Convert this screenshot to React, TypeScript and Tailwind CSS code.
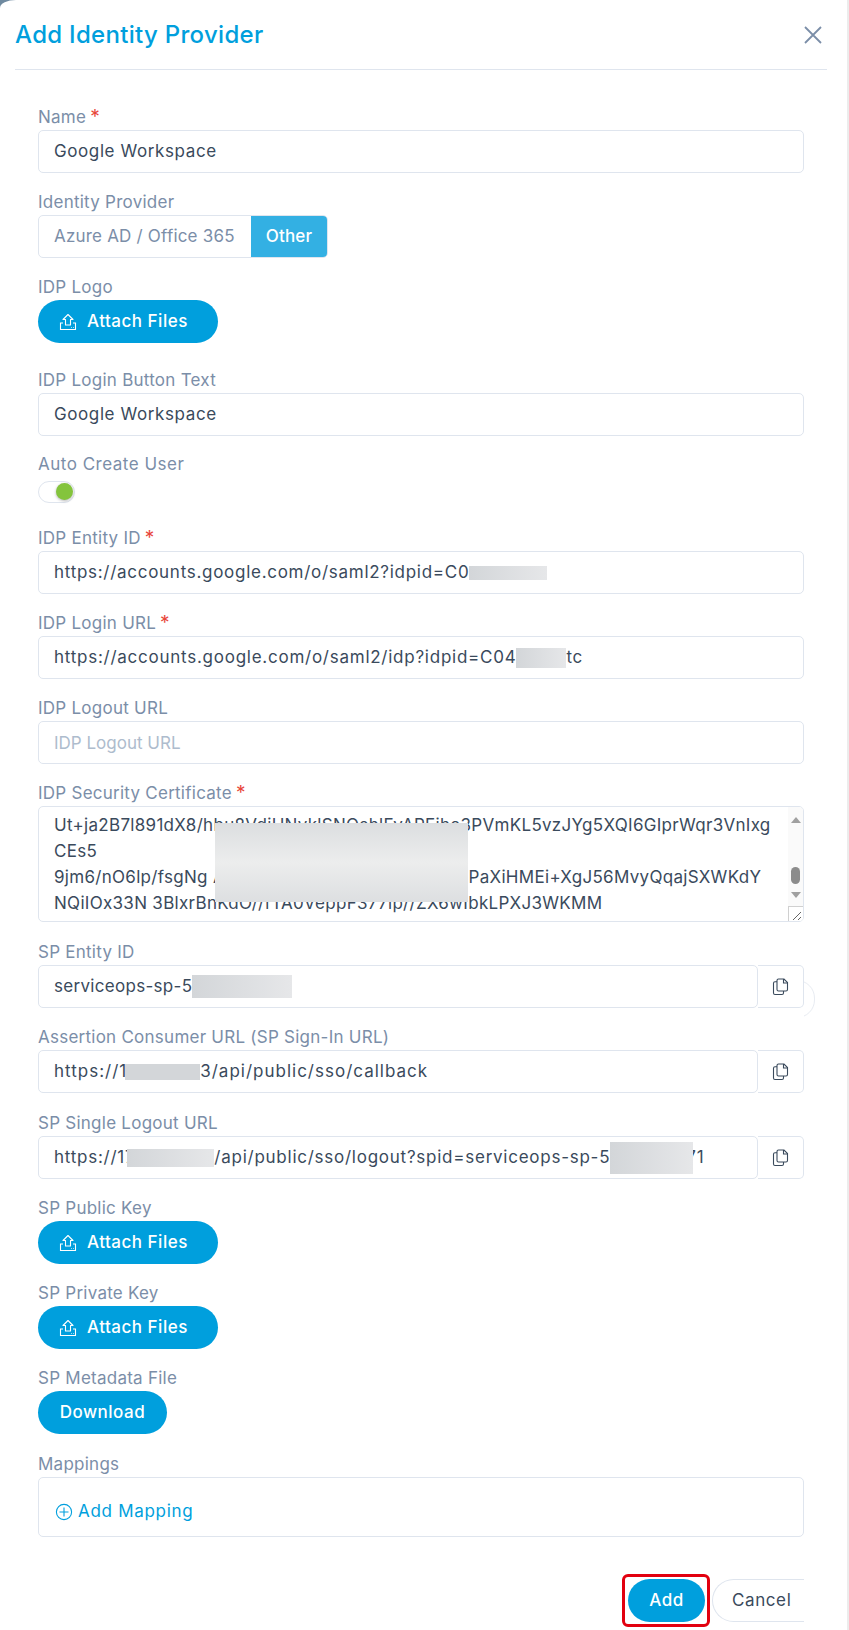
import { ReactNode } from "react";

const BLUR = "z-10 inline-block shrink-0 bg-gradient-to-r from-[#d3d6d9] to-[#e6e7e9]";

function Label({ text, required, className = "tracking-[0.25px]" }: { text: string; required?: boolean; className?: string }) {
  return (
    <div className={`flex h-[24px] items-center text-[17px] text-[#7b8ea8] ${className}`}>
      {text}
      {required && <span className="ml-[4px] -mt-[4px] text-[19px] leading-none text-[#e8463a]">*</span>}
    </div>
  );
}

function TextBox({ children, className = "tracking-[0.6px] text-[#3a4a5c]" }: { children: ReactNode; className?: string }) {
  return (
    <div
      className={`flex h-[43px] items-center overflow-hidden whitespace-pre rounded-[5px] border border-[#dfe5ee] bg-white px-[15px] text-[17px] ${className}`}
    >
      {children}
    </div>
  );
}

function CopyIcon() {
  return (
    <svg width="17" height="18" viewBox="0 0 17 18" fill="none" stroke="#3a4a5c" strokeWidth="1.1">
      <path d="M5 2.5C5 1.4 5.4 1 6.5 1H12L15.5 4.5V11.5C15.5 12.6 15 13 14 13H6.5C5.4 13 5 12.6 5 11.5Z" />
      <path d="M11.5 1V5H15.5" />
      <path d="M5 3.8H3C1.9 3.8 1.5 4.2 1.5 5.3V15C1.5 16.1 1.9 16.5 3 16.5H10C11.1 16.5 11.5 16.1 11.5 15V13" />
    </svg>
  );
}

function CopyRow({ children, className }: { children: ReactNode; className: string }) {
  return (
    <div className="flex">
      <div className="w-[720px]">
        <TextBox className={className}>{children}</TextBox>
      </div>
      <div className="flex h-[43px] w-[46px] items-center justify-center rounded-r-[5px] border border-l-0 border-[#dfe5ee] bg-white">
        <CopyIcon />
      </div>
    </div>
  );
}

function AttachButton() {
  return (
    <button className="flex h-[43px] w-[180px] items-center gap-[10px] rounded-full bg-[#009fdd] pl-[21px] text-[17px] font-medium tracking-[0.5px] text-white">
      <svg width="18" height="18" viewBox="0 0 18 18" fill="none" stroke="white" strokeWidth="1.1">
        <path d="M9 1.5L14 6.5H11.5V12H6.5V6.5H4Z" strokeLinejoin="round" />
        <path d="M4 10H1.5V16.5H16.5V10H14" />
        <path d="M12 14.5H12.6M14.2 14.5H14.8" />
      </svg>
      Attach Files
    </button>
  );
}

export default function App() {
  return (
    <div className="relative h-[1630px] w-[849px] overflow-hidden bg-white font-['Inter','Liberation_Sans',sans-serif]">
      {/* backdrop peeking around the drawer */}
      <div className="absolute left-0 top-0 h-[9px] w-[17px] bg-[#6f8aa0]">
        <div className="h-full w-full rounded-tl-[16px_8px] bg-white" />
      </div>
      <div className="absolute bottom-0 right-0 top-0 w-[2px] bg-[#ececec]" />
      <div className="absolute left-[804px] top-[978px] h-[44px] w-[14px] overflow-hidden">
        <div className="absolute -left-[25px] top-[2px] h-[38px] w-[36px] rounded-full border border-[#e8ecf2]" />
      </div>

      <div className="relative ml-[15px] flex h-[70px] w-[812px] items-center justify-between border-b border-[#dfe5ee]">
        <h1 className="text-[24px] font-medium tracking-[0.3px] text-[#009fdd]">Add Identity Provider</h1>
        <svg className="mr-[5px]" width="18" height="18" viewBox="0 0 18 18" stroke="#7b8ea8" strokeWidth="1.8">
          <path d="M1 1L17 17M17 1L1 17" />
        </svg>
      </div>

      <div className="relative ml-[38px] w-[766px] pt-[36px]">
        <Label text="Name" required />
        <TextBox>Google Workspace</TextBox>

        <div className="mt-[18px]"><Label text="Identity Provider" /></div>
        <div className="flex h-[43px] w-[290px] overflow-hidden rounded-[5px] border border-[#dfe5ee] text-[17px] tracking-[0.2px]">
          <div className="flex w-[212px] items-center pl-[15px] text-[#7b8ea8]">Azure AD / Office 365</div>
          <div className="flex flex-1 items-center justify-center bg-[#33b0e3] font-medium text-white">Other</div>
        </div>

        <div className="mt-[18px]"><Label text="IDP Logo" /></div>
        <AttachButton />

        <div className="mt-[26px]"><Label text="IDP Login Button Text" /></div>
        <TextBox>Google Workspace</TextBox>

        <div className="mt-[17px]"><Label text="Auto Create User" className="tracking-[0.5px]" /></div>
        <div className="relative mt-[4px] h-[22px] w-[37px] rounded-full border border-[#dfe5ee]">
          <div className="absolute right-[1px] top-[1px] h-[17px] w-[17px] rounded-full bg-[#84c43c] shadow-[0_1px_3px_rgba(0,0,0,0.3)]" />
        </div>

        <div className="mt-[24px]"><Label text="IDP Entity ID" required /></div>
        <TextBox className="tracking-[0.72px] text-[#3a4a5c]">
          https://accounts.google.com/o/saml2?idpid=C0
          <span className={`${BLUR} h-[14px] w-[78px]`} />
        </TextBox>

        <div className="mt-[18px]"><Label text="IDP Login URL" required /></div>
        <TextBox className="tracking-[0.75px] text-[#3a4a5c]">
          https://accounts.google.com/o/saml2/idp?idpid=C04
          <span className={`${BLUR} h-[20px] w-[50px]`} />
          tc
        </TextBox>

        <div className="mt-[18px]"><Label text="IDP Logout URL" /></div>
        <TextBox className="pt-[3px] text-[#aebccd]">IDP Logout URL</TextBox>

        <div className="mt-[18px]"><Label text="IDP Security Certificate" required /></div>
        <div className="relative h-[116px] overflow-hidden rounded-[5px] border border-[#dfe5ee] pl-[15px] pt-[5px] text-[17px] leading-[26px] tracking-[0.3px] text-[#3a4a5c]">
          <div className="whitespace-pre">Ut+ja2B7l891dX8/hbu8VdiUNvklSNQshlFvAPEjhe3PVmKL5vzJYg5XQI6GIprWqr3VnIxg</div>
          <div className="whitespace-pre">CEs5</div>
          <div className="whitespace-pre">9jm6/nO6lp/fsgNg AAAAAAAAAAAAAAAAAAAAnPaXiHMEi+XgJ56MvyQqajSXWKdY</div>
          <div className="whitespace-pre">NQiIOx33N 3BlxrBnKdO//fTA0VeppF377lp//ZX6wIbkLPXJ3WKMM</div>
          <div className="absolute left-[176px] top-[16px] h-[79px] w-[253px] bg-gradient-to-b from-[#dcdee0] via-[#eceded] to-[#dddfe1]" />
          <div className="absolute bottom-0 right-0 top-0 flex w-[15px] flex-col items-center bg-[#fafafa] pt-[10px]">
            <div className="h-0 w-0 border-x-[5px] border-b-[6px] border-x-transparent border-b-[#a0a0a0]" />
            <div className="mt-[44px] h-[17px] w-[9px] rounded-full bg-[#8c8c8c]" />
            <div className="mt-[8px] h-0 w-0 border-x-[5px] border-t-[6px] border-x-transparent border-t-[#a0a0a0]" />
          </div>
          <div className="absolute bottom-0 right-0 h-[15px] w-[15px] border-l border-t border-[#d0d0d0] bg-white">
            <svg width="14" height="14" viewBox="0 0 14 14" stroke="#666" strokeWidth="1"><path d="M4 13L12 5M9 13L12 10" /></svg>
          </div>
        </div>

        <div className="mt-[19px]"><Label text="SP Entity ID" /></div>
        <CopyRow className="tracking-[0.3px] text-[#3a4a5c]">
          serviceops-sp-5
          <span className={`${BLUR} h-[23px] w-[100px]`} />
        </CopyRow>

        <div className="mt-[18px]"><Label text="Assertion Consumer URL (SP Sign-In URL)" /></div>
        <CopyRow className="tracking-[1px] text-[#3a4a5c]">
          https://1
          <span className="z-10 -ml-[2px] h-[16px] w-[75px] shrink-0 bg-[#d3d6d9]" />
          3/api/public/sso/callback
        </CopyRow>

        <div className="mt-[19px]"><Label text="SP Single Logout URL" /></div>
        <CopyRow className="tracking-[0.75px] text-[#3a4a5c]">
          https://17
          <span className={`${BLUR} -ml-[8px] h-[18px] w-[87px]`} />
          /api/public/sso/logout?spid=serviceops-sp-5
          <span className={`${BLUR} -mr-[7px] h-[32px] w-[83px]`} />
          71
        </CopyRow>

        <div className="mt-[18px]"><Label text="SP Public Key" /></div>
        <AttachButton />

        <div className="mt-[18px]"><Label text="SP Private Key" /></div>
        <AttachButton />

        <div className="mt-[18px]"><Label text="SP Metadata File" /></div>
        <button className="h-[43px] w-[129px] rounded-full bg-[#009fdd] text-[17px] font-medium tracking-[0.5px] text-white">Download</button>

        <div className="mt-[19px]"><Label text="Mappings" /></div>
        <div className="flex h-[60px] items-center gap-[5px] rounded-[5px] border border-[#dfe5ee] pl-[16px] pt-[10px] text-[17px] tracking-[0.7px] text-[#009fdd]">
          <svg width="18" height="18" viewBox="0 0 18 18" fill="none" stroke="#009fdd" strokeWidth="1.1">
            <circle cx="9" cy="9" r="7.6" />
            <path d="M9 4.5V13.5M4.5 9H13.5" />
          </svg>
          Add Mapping
        </div>

        <div className="mt-[42px] flex h-[43px] justify-end overflow-hidden">
          <button className="h-[43px] w-[77px] rounded-full bg-[#009fdd] text-[17px] font-medium tracking-[0.5px] text-white">Add</button>
          <div className="ml-[7px] flex h-[43px] w-[92px] items-center rounded-l-full border-y border-l border-[#dfe5ee] pl-[19px] text-[17px] tracking-[0.6px] text-[#3a4a5c]">Cancel</div>
        </div>
        <div className="absolute left-[584px] top-[1504px] h-[53px] w-[88px] rounded-[6px] border-[3px] border-[#e2000f]" />
      </div>
    </div>
  );
}
